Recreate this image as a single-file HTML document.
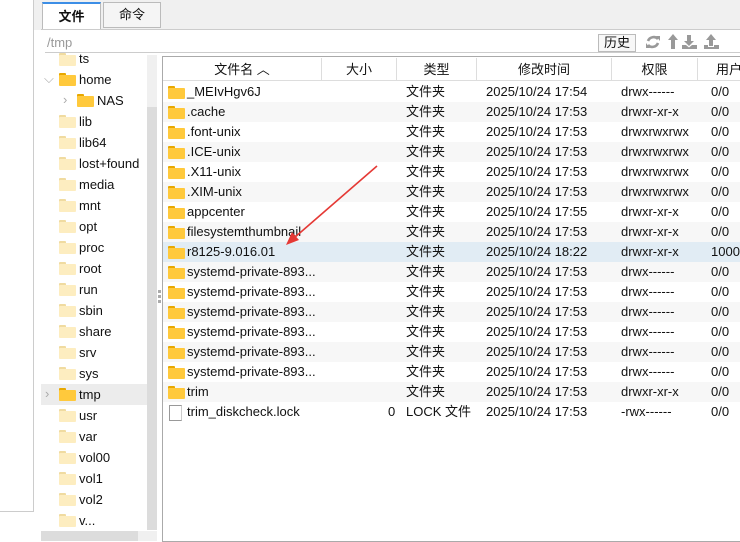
<!DOCTYPE html><html><head><meta charset="utf-8"><style>
*{margin:0;padding:0;box-sizing:border-box}
body{width:740px;height:542px;background:#fff;position:relative;overflow:hidden;font-family:"Liberation Sans","Noto Sans CJK SC",sans-serif;font-size:13px;color:#111;line-height:20px}
.a{position:absolute}
.f{position:absolute;width:17px;height:13px}
.f:before{content:"";position:absolute;left:0;top:0;width:7px;height:4px;background:#e8a800;border-radius:1px 1px 0 0}
.f:after{content:"";position:absolute;left:0;top:2px;width:17px;height:11px;background:#ffc93c;border-radius:1px}
.fl:before{background:#f0dba0}.fl:after{background:#fdedc0}
.row{position:absolute;left:163px;width:577px;height:20px}
.row span{position:absolute;top:0;height:20px;line-height:20px;white-space:nowrap}
.t{position:absolute;height:20px;line-height:20px}
</style></head><body>
<div class="a" style="left:0;top:0;width:740px;height:30px;background:#f0f0f0"></div>
<div class="a" style="left:0;top:0;width:34px;height:512px;background:#fff;border-right:1px solid #ccc;border-bottom:1px solid #ccc"></div>
<div class="a" style="left:42px;top:2px;width:59px;height:28px;background:#fff;border:1px solid #bbb;border-top:2px solid #3c8ee6;border-bottom:none;text-align:center;line-height:26px;font-weight:bold;font-size:13px">文件</div>
<div class="a" style="left:103px;top:2px;width:58px;height:26px;background:#f5f5f5;border:1px solid #bbb;text-align:center;line-height:24px;font-size:13px">命令</div>
<div class="a" style="left:41px;top:29px;width:699px;height:1px;background:#ccc"></div>
<div class="a" style="left:47px;top:33px;color:#999;font-size:13px">/tmp</div>
<div class="a" style="left:45px;top:52px;width:695px;height:1px;background:#ccc"></div>
<div class="a" style="left:598px;top:34px;width:38px;height:18px;border:1px solid #bbb;background:#f7f7f7;text-align:center;line-height:16px;font-size:13px">历史</div>
<svg class="a" style="left:645px;top:33px" width="95" height="18" viewBox="0 0 95 18">
<g fill="none" stroke="#999" stroke-width="2.6"><path d="M13 6 A6 6 0 0 0 3 8"/><path d="M3 12 A6 6 0 0 0 13 10"/></g>
<path d="M11 3 L15 3 L15 8 Z M5 15 L1 15 L1 10 Z" fill="#999"/>
<path d="M26 16 L26 7 L23 7 L28 1 L33 7 L30 7 L30 16 Z" fill="#999"/>
<path d="M42 2 H46 V8 H49 L44 13 L39 8 H42 Z M37 12 H41 L44 14.5 L47 12 H52 V16 H37 Z" fill="#999"/>
<path d="M64 13 V7 H61 L66 1 L71 7 H68 V13 Z M59 12 H63 V14 H69 V12 H74 V16 H59 Z" fill="#999"/>
</svg>
<div class="a" style="left:41px;top:384px;width:106px;height:21px;background:#ececec"></div>
<div class="a" style="left:147px;top:55px;width:10px;height:475px;background:#dcdcdc"></div>
<div class="a" style="left:147px;top:55px;width:10px;height:52px;background:#f0f0f0"></div>
<div class="a" style="left:41px;top:531px;width:97px;height:10px;background:#dcdcdc"></div>
<div class="a" style="left:138px;top:531px;width:19px;height:10px;background:#f0f0f0"></div>
<div class="a" style="left:158px;top:290px;width:3px;height:3px;background:#aaa;box-shadow:0 5px #aaa,0 10px #aaa"></div>
<div id="tree"></div>
<div class="a" style="left:162px;top:56px;width:578px;height:486px;border-left:1px solid #aaa;border-top:1px solid #aaa;border-bottom:1px solid #aaa"></div>
<div class="a" style="left:163px;top:57px;width:577px;height:24px;border-bottom:1px solid #ddd;background:#fff"></div>
<div id="hdr"></div>
<div id="rows"></div>
<svg class="a" style="left:0;top:0" width="740" height="542"><line x1="377" y1="166" x2="294" y2="238" stroke="#e53935" stroke-width="1.6"/><path d="M286 245 L292 232 L299 240 Z" fill="#e53935"/></svg>
<script>
var tree=[["ts",1],["home",0,1],["NAS",0,2],["lib",1],["lib64",1],["lost+found",1],["media",1],["mnt",1],["opt",1],["proc",1],["root",1],["run",1],["sbin",1],["share",1],["srv",1],["sys",1],["tmp",0,3],["usr",1],["var",1],["vol00",1],["vol1",1],["vol2",1],["v...",1]];
var h="";tree.forEach(function(t,i){var y=58+21*i;var x=t[2]==2?77:59;
if(i>0)h+='<div class="f'+(t[1]?' fl':'')+'" style="left:'+x+'px;top:'+(y-6)+'px"></div>';else h+='<div class="f fl" style="left:59px;top:53px;height:11px"></div>';
if(t[2]==1)h+='<div class="a" style="left:44px;top:'+(y-10)+'px;color:#aaa">⌵</div>';
if(t[2]==2||t[2]==3)h+='<div class="a" style="left:'+(t[2]==2?63:45)+'px;top:'+(y-10)+'px;color:#aaa">›</div>';
h+='<div class="t" style="left:'+(x+20)+'px;top:'+(y-9)+'px">'+t[0]+'</div>';});
document.getElementById('tree').innerHTML=h;
var hd=[["文件名 ︿",163,322],["大小",322,397],["类型",397,477],["修改时间",477,612],["权限",612,698],["用户",698,760]];
h="";hd.forEach(function(c,i){h+='<div class="a" style="left:'+c[1]+'px;top:58px;width:'+(c[2]-c[1])+'px;height:23px;line-height:23px;text-align:center;'+(i<5?'border-right:1px solid #ddd;':'')+'">'+c[0]+'</div>'});
document.getElementById('hdr').innerHTML=h;
var rs=[["_MEIvHgv6J","17:54","drwx------"],[".cache","17:53","drwxr-xr-x"],[".font-unix","17:53","drwxrwxrwx"],[".ICE-unix","17:53","drwxrwxrwx"],[".X11-unix","17:53","drwxrwxrwx"],[".XIM-unix","17:53","drwxrwxrwx"],["appcenter","17:55","drwxr-xr-x"],["filesystemthumbnail","17:53","drwxr-xr-x"],["r8125-9.016.01","18:22","drwxr-xr-x","1000,"],["systemd-private-893...","17:53","drwx------"],["systemd-private-893...","17:53","drwx------"],["systemd-private-893...","17:53","drwx------"],["systemd-private-893...","17:53","drwx------"],["systemd-private-893...","17:53","drwx------"],["systemd-private-893...","17:53","drwx------"],["trim","17:53","drwxr-xr-x"],["trim_diskcheck.lock","17:53","-rwx------"]];
h="";rs.forEach(function(r,i){var y=82+20*i;var bg=i==8?'#e1ecf4':(i%2?'#f7f7f7':'#fff');var file=i==16;
h+='<div class="row" style="top:'+y+'px;background:'+bg+'">'+(file?'<div class="a" style="left:6px;top:3px;width:13px;height:16px;border:1px solid #999;border-right-color:#ccc;background:#fff"></div>':'<div class="f" style="left:5px;top:4px"></div>')+
'<span style="left:24px">'+r[0]+'</span>'+(file?'<span style="left:225px">0</span>':'')+'<span style="left:243px">'+(file?'LOCK 文件':'文件夹')+'</span><span style="left:323px">2025/10/24 '+r[1]+'</span><span style="left:458px">'+r[2]+'</span><span style="left:548px">'+(r[3]||'0/0')+'</span></div>'});
document.getElementById('rows').innerHTML=h;
</script>
</body></html>
